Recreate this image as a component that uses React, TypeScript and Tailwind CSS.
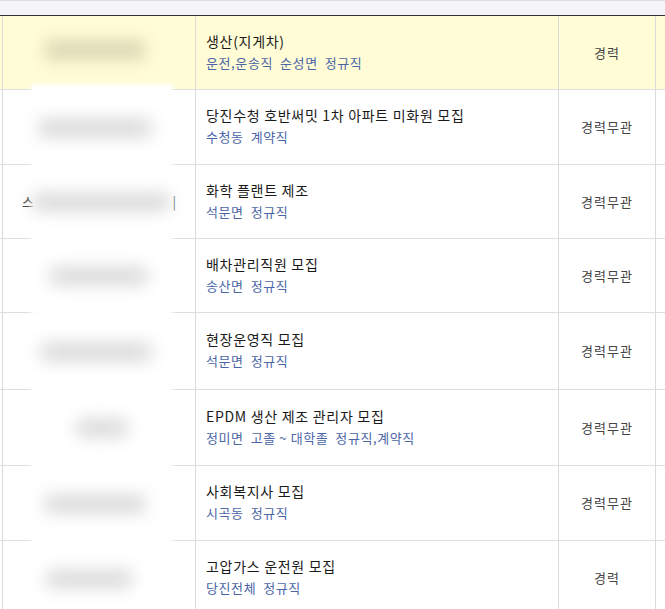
import React from "react";

type Job = {
  title: string;
  tags: string[];
  career: string;
  h: string;
  blob: string;
  highlight?: boolean;
};

const jobs: Job[] = [
  { title: "생산(지게차)", tags: ["운전,운송직", "순성면", "정규직"], career: "경력", h: "h-[74px]", blob: "w-[104px] ml-[12px]", highlight: true },
  { title: "당진수청 호반써밋 1차 아파트 미화원 모집", tags: ["수청동", "계약직"], career: "경력무관", h: "h-[75px]", blob: "w-[112px] ml-[8px]" },
  { title: "화학 플랜트 제조", tags: ["석문면", "정규직"], career: "경력무관", h: "h-[74px]", blob: "w-[136px] ml-[2px]" },
  { title: "배차관리직원 모집", tags: ["송산면", "정규직"], career: "경력무관", h: "h-[74px]", blob: "w-[96px] ml-[20px]" },
  { title: "현장운영직 모집", tags: ["석문면", "정규직"], career: "경력무관", h: "h-[77px]", blob: "w-[110px] ml-[10px]" },
  { title: "EPDM 생산 제조 관리자 모집", tags: ["정미면", "고졸 ~ 대학졸", "정규직,계약직"], career: "경력무관", h: "h-[76px]", blob: "w-[50px] ml-[46px]" },
  { title: "사회복지사 모집", tags: ["시곡동", "정규직"], career: "경력무관", h: "h-[75px]", blob: "w-[100px] ml-[14px]" },
  { title: "고압가스 운전원 모집", tags: ["당진전체", "정규직"], career: "경력", h: "h-[75px]", blob: "w-[84px] ml-[16px]" },
];

export default function App() {
  return (
    <div className="w-[665px] h-[609px] overflow-hidden bg-white font-['Noto_Sans_CJK_KR','Noto_Sans',sans-serif]">
      <div className="h-[15px] bg-[#f5f5f8] border-t border-[#dcdce0]" />
      <div className="relative border-t border-[#333]">
        {jobs.map((job, i) => (
          <div
            key={i}
            className={`flex pl-[2px] border-b border-[#dedede] ${job.h} ${job.highlight ? "bg-[#fffcd6]" : "bg-white"}`}
          >
            <div className="w-[194px] shrink-0 overflow-hidden border-l border-r border-[#dadada] flex items-center pl-[19px] pr-[19px]">
              {i === 2 && (
                <>
                  <span className="text-[13px] text-[#444] whitespace-nowrap">스</span>
                  <span className="ml-auto text-[13px] text-[#444]">|</span>
                </>
              )}
            </div>
            <div className="w-[363px] shrink-0 border-r border-[#dadada] flex flex-col justify-center pl-[10px] pb-[2px]">
              <div className="text-[14px] leading-[21px] tracking-[0.7px] text-[#1a1a1a]">{job.title}</div>
              <div className="text-[13px] leading-[21px] tracking-[0.6px] text-[#4b66a6] flex gap-[7px]">
                {job.tags.map((t) => (
                  <span key={t}>{t}</span>
                ))}
              </div>
            </div>
            <div className="w-[97px] shrink-0 border-r border-[#dadada] flex items-center justify-center text-[13px] tracking-[1px] text-[#444]">
              {job.career}
            </div>
            <div className="flex-1" />
          </div>
        ))}

        {/* blurred company column */}
        <div className="absolute left-[31px] top-[0px] w-[142px] h-[600px] flex flex-col">
          <div className="h-[68px] shrink-0 flex items-center">
            <div className="w-[100px] ml-[14px] h-[20px] bg-[#c4c0a0] blur-[8px] opacity-60" />
          </div>
          <div className="flex-1 bg-white/95 blur-[2px] flex flex-col">
            {jobs.slice(1).map((job, i) => (
              <div key={i} className={`${job.h} shrink-0 flex items-center ${i === 0 ? "mt-[6px]" : ""}`}>
                <div className={`${job.blob} h-[18px] bg-[#b5b5b5] blur-[8px] opacity-50`} />
              </div>
            ))}
          </div>
        </div>
      </div>
    </div>
  );
}
